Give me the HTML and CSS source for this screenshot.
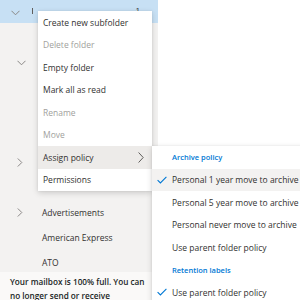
FILE: index.html
```html
<!DOCTYPE html>
<html>
<head>
<meta charset="utf-8">
<link rel="stylesheet" href="styles.css">
</head>
<body>
<div class="page">
  <aside class="pane">
    <div class="folders">
      <div class="row selected">
        <span class="chev"><svg width="9" height="6" viewBox="0 0 9 6"><path d="M0.5 0.8 L4.5 4.8 L8.5 0.8" fill="none" stroke="#8a8886" stroke-width="1"/></svg></span>
        <span class="name"><span class="caret"></span></span>
        <span class="count">1</span>
      </div>
      <div class="row"></div>
      <div class="row"><span class="chev"><svg width="9" height="6" viewBox="0 0 9 6"><path d="M0.5 0.8 L4.5 4.8 L8.5 0.8" fill="none" stroke="#8a8886" stroke-width="1"/></svg></span></div>
      <div class="row"></div>
      <div class="row"></div>
      <div class="row"></div>
      <div class="row"><span class="chev"><svg width="6" height="9" viewBox="0 0 6 9"><path d="M0.8 0.5 L4.8 4.5 L0.8 8.5" fill="none" stroke="#8a8886" stroke-width="1"/></svg></span></div>
      <div class="row"></div>
      <div class="row"><span class="chev"><svg width="6" height="9" viewBox="0 0 6 9"><path d="M0.8 0.5 L4.8 4.5 L0.8 8.5" fill="none" stroke="#8a8886" stroke-width="1"/></svg></span><span class="name">Advertisements</span></div>
      <div class="row"><span class="chev"></span><span class="name">American Express</span></div>
      <div class="row"><span class="chev"></span><span class="name">ATO</span></div>
    </div>
    <div class="quota">Your mailbox is 100% full. You can no longer send or receive</div>
  </aside>
  <main class="content"></main>

  <ul class="menu">
    <li class="item">Create new subfolder</li>
    <li class="item disabled">Delete folder</li>
    <li class="item">Empty folder</li>
    <li class="item">Mark all as read</li>
    <li class="item disabled">Rename</li>
    <li class="item disabled">Move</li>
    <li class="item active">Assign policy<svg class="sub-arrow" width="6" height="11" viewBox="0 0 6 11"><path d="M0.6 0.5 L5.2 5.5 L0.6 10.5" fill="none" stroke="#605e5c" stroke-width="1"/></svg></li>
    <li class="item">Permissions</li>
  </ul>

  <ul class="submenu">
    <li class="header">Archive policy</li>
    <li class="opt checked"><span class="check"><svg width="10" height="8" viewBox="0 0 10 8"><path d="M0.6 4.2 L3.4 7 L9.4 0.8" fill="none" stroke="#0078d4" stroke-width="1.1"/></svg></span>Personal 1 year move to archive</li>
    <li class="opt"><span class="check"></span>Personal 5 year move to archive</li>
    <li class="opt"><span class="check"></span>Personal never move to archive</li>
    <li class="opt"><span class="check"></span>Use parent folder policy</li>
    <li class="header">Retention labels</li>
    <li class="opt"><span class="check"><svg width="10" height="8" viewBox="0 0 10 8"><path d="M0.6 4.2 L3.4 7 L9.4 0.8" fill="none" stroke="#0078d4" stroke-width="1.1"/></svg></span>Use parent folder policy</li>
  </ul>
</div>
</body>
</html>
```

FILE: styles.css
```css
* { box-sizing: border-box; }
html, body { margin: 0; padding: 0; }
body {
  font-family: "Open Sans", "Noto Sans", sans-serif;
  font-size: 8.5px;
  color: #323130;
  background: #ffffff;
}
.page {
  position: relative;
  width: 300px;
  height: 300px;
  overflow: hidden;
  display: flex;
}
.pane {
  width: 158px;
  height: 300px;
  flex: none;
  background: #f3f2f1;
  display: flex;
  flex-direction: column;
}
.folders {
  flex: 1;
  min-height: 0;
  overflow: hidden;
  display: flex;
  flex-direction: column;
}
.row {
  height: 25px;
  flex: none;
  display: flex;
  align-items: center;
  padding-left: 17px;
  padding-right: 18px;
}
.row.selected {
  background: #c7e0f4;
  height: 23px;
  margin-bottom: 2px;
  align-items: flex-start;
  padding-top: 8px;
}
.chev {
  width: 25px;
  flex: none;
  display: flex;
  align-items: center;
}
.selected .chev { width: 21px; margin-left: -6px; padding-top: 2px; }
.row .chev svg { display: block; }
.name { flex: 1; white-space: nowrap; }
.caret {
  display: block;
  width: 1px;
  height: 6px;
  background: #605e5c;
}
.count { font-size: 8px; line-height: 4px; }
.quota {
  flex: none;
  background: #faf9f8;
  padding: 3px 6px 0 10px;
  height: 28px;
  font-size: 8.2px;
  font-weight: 600;
  line-height: 14px;
  color: #201f1e;
}
.content { flex: 1; }

.menu {
  position: absolute;
  left: 38px;
  top: 11px;
  width: 114px;
  margin: 0;
  padding: 0;
  list-style: none;
  background: #ffffff;
  box-shadow: 0 2px 6px rgba(0,0,0,0.16), 0 0 2px rgba(0,0,0,0.08);
}
.item {
  height: 22.5px;
  display: flex;
  align-items: center;
  padding-left: 5px;
  padding-right: 8px;
  white-space: nowrap;
}
.item.disabled { color: #a19f9d; }
.item.active { background: #edebe9; }
.sub-arrow { margin-left: auto; }

.submenu {
  position: absolute;
  left: 152px;
  top: 146px;
  width: 160px;
  margin: 0;
  padding: 0;
  list-style: none;
  background: #ffffff;
  box-shadow: 0 2px 6px rgba(0,0,0,0.16), 0 0 2px rgba(0,0,0,0.08);
}
.header {
  height: 22.5px;
  display: flex;
  align-items: center;
  padding-left: 20px;
  font-size: 7.5px;
  font-weight: 600;
  color: #0078d4;
}
.opt {
  height: 22.5px;
  display: flex;
  align-items: center;
  padding-left: 5px;
  white-space: nowrap;
}
.opt.checked { background: #f3f2f1; }
.check {
  width: 15px;
  flex: none;
  display: flex;
  align-items: center;
}
.check svg { display: block; }
```
